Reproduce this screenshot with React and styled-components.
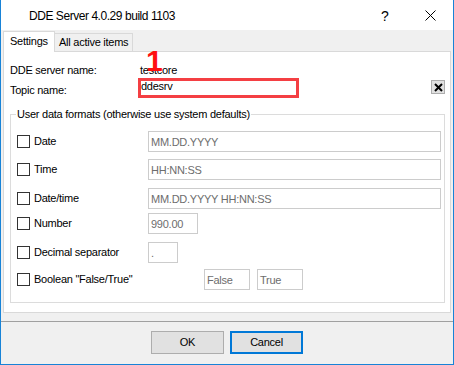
import React from 'react';
import styled, { createGlobalStyle } from 'styled-components';

const Global = createGlobalStyle`
  html, body { margin: 0; padding: 0; background: #ffffff; }
  body { font-family: "Liberation Sans", Arial, sans-serif; }
`;

const Window = styled.div`
  position: relative;
  width: 454px;
  height: 365px;
  box-sizing: border-box;
  border: 1px solid #1883d7;
  border-top: none;
  display: flex;
  flex-direction: column;
  background: #f0f0f0;
  font-family: "Liberation Sans", Arial, sans-serif;
  font-size: 11px;
  letter-spacing: -0.25px;
  color: #000;
  overflow: hidden;
`;

const TitleBar = styled.div`
  height: 30px;
  flex: none;
  background: #ffffff;
  display: flex;
  align-items: center;
`;

const Title = styled.div`
  flex: 1;
  padding-left: 28px;
  padding-top: 2px;
  font-size: 12px;
  letter-spacing: -0.45px;
  line-height: 14px;
`;

const CaptionButton = styled.div`
  width: ${(p) => p.$w}px;
  height: 30px;
  display: flex;
  align-items: center;
  justify-content: center;
  font-size: 14px;
  letter-spacing: 0;
  padding-top: 1px;
  box-sizing: border-box;
`;

const Main = styled.div`
  flex: none;
  height: 291px;
  box-sizing: border-box;
  padding: 0 2px 8px;
  display: flex;
  flex-direction: column;
`;

const TabStrip = styled.div`
  height: 21px;
  flex: none;
  display: flex;
  align-items: flex-end;
`;

const Tab = styled.div`
  position: relative;
  z-index: ${(p) => (p.$active ? 1 : 0)};
  box-sizing: border-box;
  width: ${(p) => p.$w}px;
  height: ${(p) => (p.$active ? 21 : 18)}px;
  margin-bottom: ${(p) => (p.$active ? -1 : 0)}px;
  background: ${(p) => (p.$active ? '#ffffff' : '#f0f0f0')};
  border: 1px solid #d9d9d9;
  border-bottom: none;
  border-left: ${(p) => (p.$active ? '1px solid #d9d9d9' : 'none')};
  padding: ${(p) => (p.$active ? '3px 0 0 6px' : '2px 0 0 4px')};
  line-height: 13px;
  white-space: nowrap;
`;

const Panel = styled.div`
  position: relative;
  box-sizing: border-box;
  height: 262px;
  flex: none;
  background: #ffffff;
  border: 1px solid #d9d9d9;
  padding: 12px 5px 0 6px;
`;

const InfoRow = styled.div`
  display: flex;
  align-items: flex-start;
  margin-top: ${(p) => p.$mt || 0}px;
  line-height: 13px;
`;

const InfoLabel = styled.div`
  width: 128px;
  flex: none;
  padding-top: ${(p) => p.$pt || 0}px;
`;

const InfoValue = styled.div`
  padding-left: 2px;
`;

const TopicBox = styled.div`
  box-sizing: border-box;
  width: 161px;
  height: 20px;
  border: 3px solid #f43f43;
  line-height: 11px;
`;

const ClearButton = styled.div`
  margin-left: auto;
  margin-top: 2px;
  box-sizing: border-box;
  width: 14px;
  height: 14px;
  background: #e1e1e1;
  border: 1px solid #adadad;
  display: flex;
  align-items: center;
  justify-content: center;
`;

const Group = styled.fieldset`
  margin: 10px 0 0 0;
  padding: 10px 3px 12px 6px;
  border: 1px solid #dcdcdc;
  min-width: 0;
`;

const Legend = styled.legend`
  padding: 0 1px;
  margin-left: -1px;
  line-height: 13px;
`;

const Row = styled.div`
  display: flex;
  align-items: center;
  height: 21px;
  margin-top: ${(p) => p.$mt || 0}px;
`;

const Check = styled.div`
  width: 13px;
  height: 13px;
  box-sizing: border-box;
  border: 1px solid #333333;
  background: #ffffff;
  flex: none;
`;

const RowLabel = styled.div`
  margin-left: 4px;
  width: ${(p) => p.$w || 114}px;
  flex: none;
  line-height: 13px;
  white-space: nowrap;
`;

const Field = styled.div`
  box-sizing: border-box;
  height: 21px;
  ${(p) => (p.$w ? `width: ${p.$w}px; flex: none;` : 'flex: 1;')}
  margin-left: ${(p) => p.$ml || 0}px;
  border: 1px solid #cccccc;
  background: #ffffff;
  color: #6d6d6d;
  padding: 2px 0 0 2px;
  line-height: 17px;
  white-space: nowrap;
  overflow: hidden;
`;

const Separator = styled.div`
  height: 1px;
  flex: none;
  background: #a0a0a0;
`;

const ButtonBar = styled.div`
  flex: 1;
  display: flex;
  justify-content: center;
  gap: 6px;
  padding-top: 9px;
  box-sizing: border-box;
`;

const Button = styled.div`
  box-sizing: border-box;
  width: 73px;
  height: 23px;
  background: #e1e1e1;
  border: ${(p) => (p.$primary ? '2px solid #0078d7' : '1px solid #adadad')};
  display: flex;
  align-items: center;
  justify-content: center;
  line-height: 13px;
`;

const Mark = styled.div`
  position: absolute;
  left: 142px;
  top: -2px;
  font-size: 30px;
  font-weight: bold;
  line-height: 22px;
  color: #ff1010;
  letter-spacing: 0;
  pointer-events: none;
`;

const formats = [
  { label: 'Date', value: 'MM.DD.YYYY', mt: 0 },
  { label: 'Time', value: 'HH:NN:SS', mt: 7 },
  { label: 'Date/time', value: 'MM.DD.YYYY HH:NN:SS', mt: 8 },
  { label: 'Number', value: '990.00', mt: 4, w: 50 },
  { label: 'Decimal separator', value: '.', mt: 8, w: 30 },
];

export default function App() {
  return (
    <>
      <Global />
      <Window>
        <TitleBar>
          <Title>DDE Server 4.0.29 build 1103</Title>
          <CaptionButton $w={46}>?</CaptionButton>
          <CaptionButton $w={45}>
            <svg width="11" height="11" viewBox="0 0 11 11">
              <path d="M0.5 0.5 L10.5 10.5 M10.5 0.5 L0.5 10.5" stroke="#000" strokeWidth="1" fill="none" />
            </svg>
          </CaptionButton>
        </TitleBar>
        <Main>
          <TabStrip>
            <Tab $active $w={52}>Settings</Tab>
            <Tab $w={78}>All active items</Tab>
          </TabStrip>
          <Panel>
            <InfoRow>
              <InfoLabel>DDE server name:</InfoLabel>
              <InfoValue>testcore</InfoValue>
            </InfoRow>
            <InfoRow $mt={1}>
              <InfoLabel $pt={6}>Topic name:</InfoLabel>
              <TopicBox>ddesrv</TopicBox>
              <ClearButton>
                <svg width="9" height="9" viewBox="0 0 9 9">
                  <path d="M1 1 L8 8 M8 1 L1 8" stroke="#000" strokeWidth="2" fill="none" />
                </svg>
              </ClearButton>
            </InfoRow>
            <Group>
              <Legend>User data formats (otherwise use system defaults)</Legend>
              {formats.map((f) => (
                <Row key={f.label} $mt={f.mt}>
                  <Check />
                  <RowLabel>{f.label}</RowLabel>
                  <Field $w={f.w}>{f.value}</Field>
                </Row>
              ))}
              <Row $mt={6}>
                <Check />
                <RowLabel $w={170}>Boolean "False/True"</RowLabel>
                <Field $w={46}>False</Field>
                <Field $w={46} $ml={7}>True</Field>
              </Row>
            </Group>
            <Mark>1</Mark>
          </Panel>
        </Main>
        <Separator />
        <ButtonBar>
          <Button>OK</Button>
          <Button $primary>Cancel</Button>
        </ButtonBar>
      </Window>
    </>
  );
}
